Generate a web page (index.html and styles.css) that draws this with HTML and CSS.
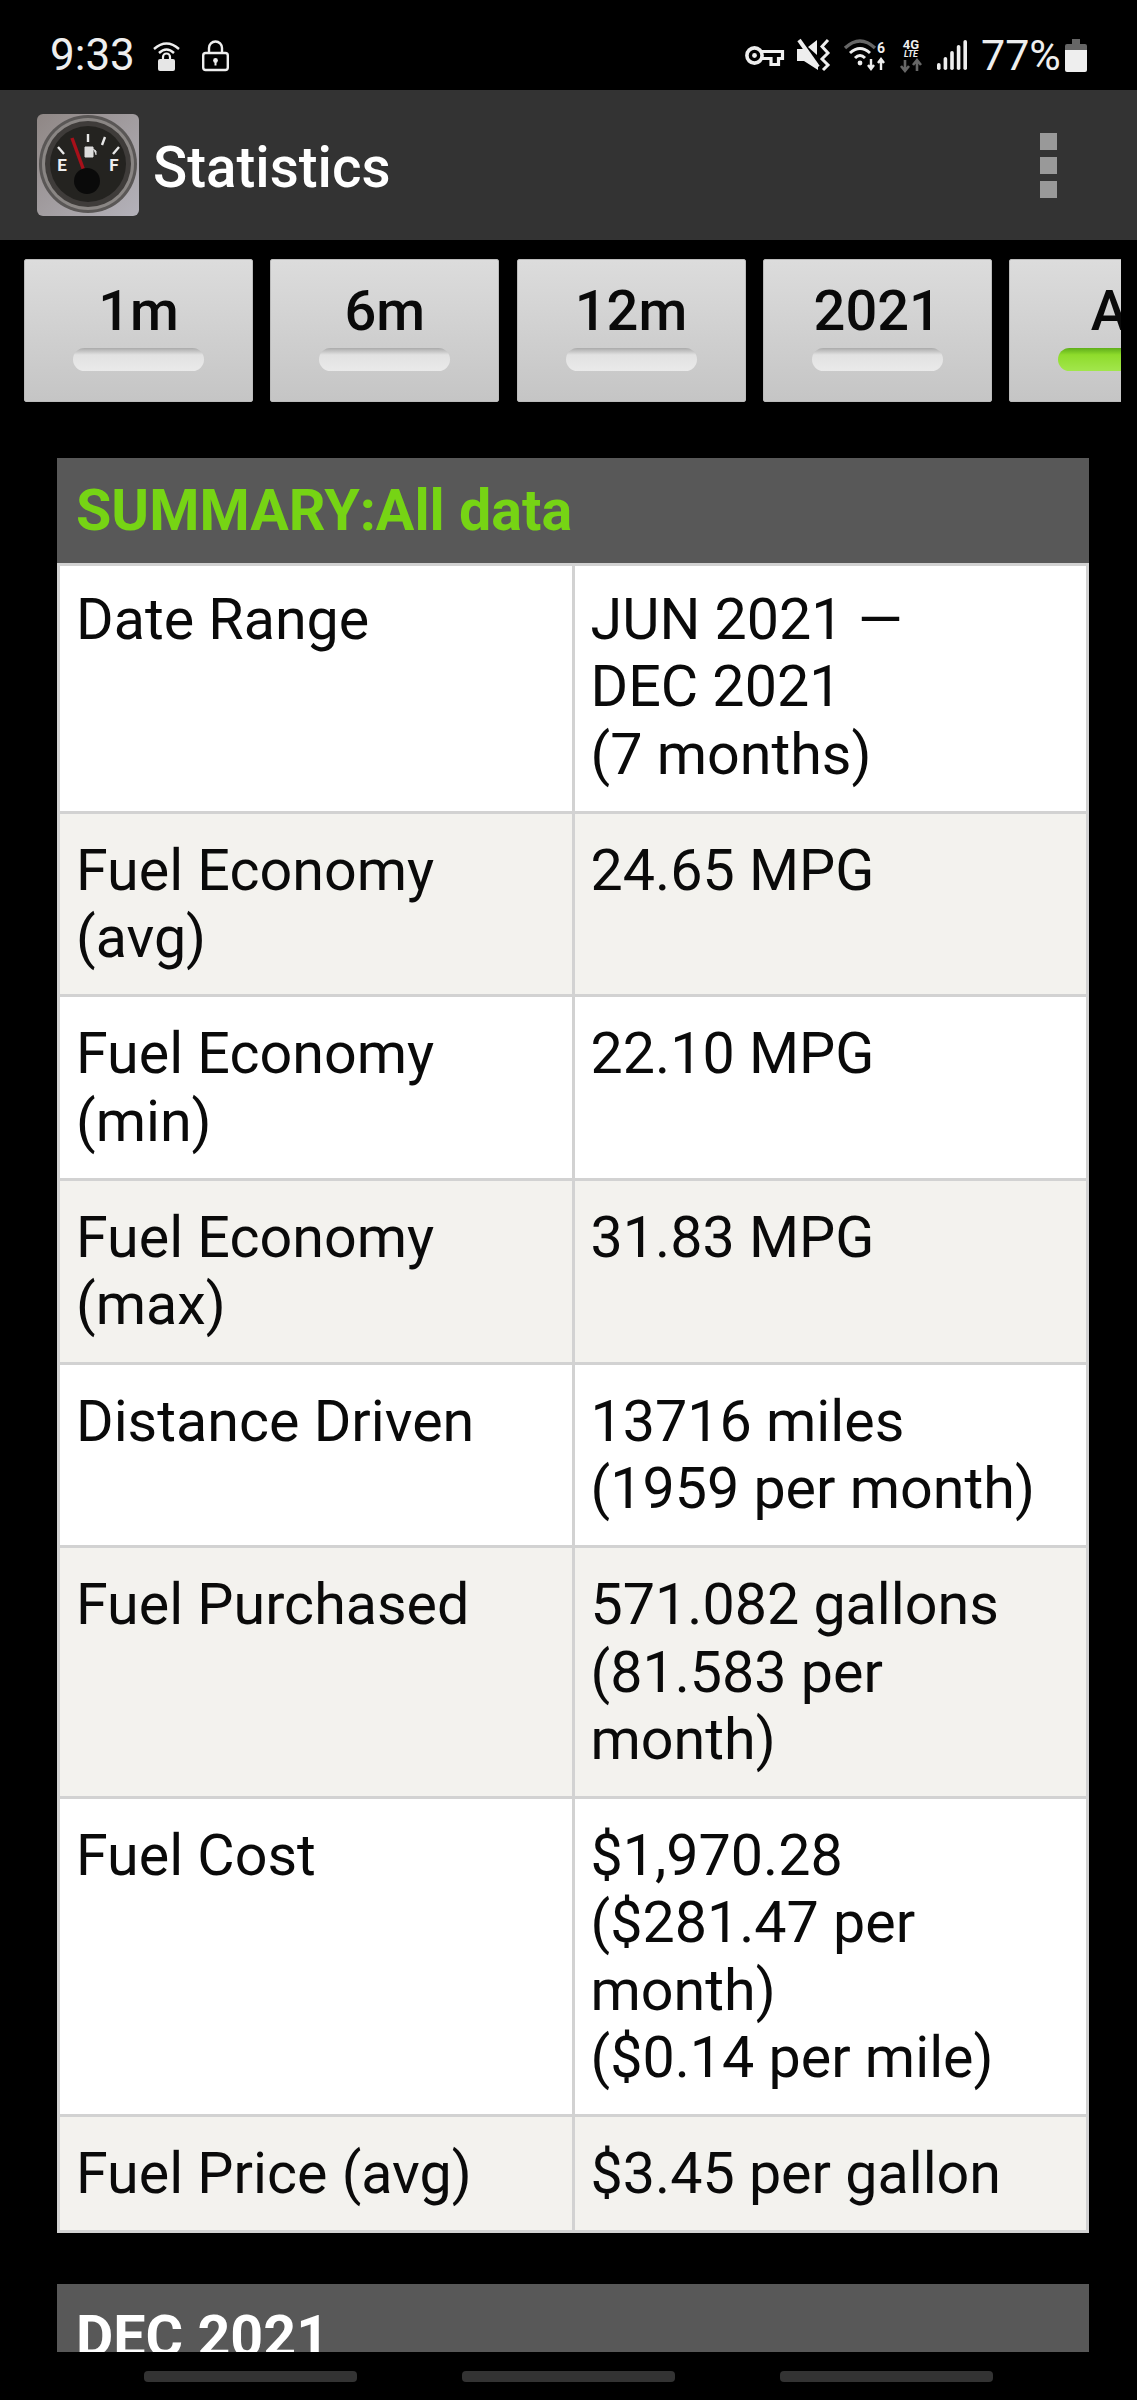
FILE: index.html
```html
<!DOCTYPE html>
<html lang="en">

<head>
  <meta charset="UTF-8">
  <meta name="viewport" content="width=device-width, initial-scale=1.0">
  <title>Statistics</title>
  <link rel="stylesheet" href="styles.css">
</head>

<body>
  <div class="status-bar">
    <div class="status-left">
      <span class="clock">9:33</span>
      <svg class="hotspot-icon" viewBox="0 0 27 31" width="27" height="31">
        <path d="M1 9 Q13.5 -2 26 9" fill="none" stroke="#eee" stroke-width="2.4" />
        <path d="M6 13 Q13.5 6 21 13" fill="none" stroke="#eee" stroke-width="2.4" />
        <path d="M10 19 V17 a3.5 3.5 0 0 1 7 0 V19" fill="none" stroke="#eee" stroke-width="2.2" />
        <rect x="5" y="19" width="17" height="12" rx="2" fill="#e6e6e6" />
      </svg>
      <svg class="lock-icon" viewBox="0 0 27 31" width="27" height="31">
        <path d="M7 13 V8 a6.5 6.5 0 0 1 13 0 V13" fill="none" stroke="#eee" stroke-width="2.4" />
        <rect x="1.2" y="13" width="24.6" height="17" rx="2.5" fill="none" stroke="#eee" stroke-width="2.4" />
        <circle cx="13.5" cy="20.5" r="2.4" fill="#eee" />
        <rect x="12.5" y="21" width="2" height="4.5" fill="#eee" />
      </svg>
    </div>
    <div class="status-right">
      <svg class="key-icon" viewBox="0 0 39 21" width="39" height="21">
        <circle cx="9.5" cy="10.5" r="7.6" fill="none" stroke="#eee" stroke-width="3.6" />
        <circle cx="9.5" cy="10.5" r="2.4" fill="#eee" />
        <path d="M17 6.5 H37.5 V13.5 H33.5 V19.5 H26 V13.5 H17" fill="none" stroke="#eee" stroke-width="3.2" />
      </svg>
      <svg class="mute-icon" viewBox="0 0 34 32" width="34" height="32">
        <path d="M0 10 H7 L21 25 V31 L7 22 H0 Z" fill="#eee" />
        <path d="M2 1 L21 28" stroke="#eee" stroke-width="4" />
        <path d="M11 8 L20 1 V16 Z" fill="#eee" />
        <path d="M31 1 L25 7.5 L31 14 L25 20 L31 26 L26 31" fill="none" stroke="#eee" stroke-width="3" />
      </svg>
      <svg class="wifi-icon" viewBox="0 0 43 32" width="43" height="32">
        <path d="M1 9 Q16 -5 31 9" fill="none" stroke="#666" stroke-width="3.4" />
        <path d="M6 14 Q16 5 26 14" fill="none" stroke="#eee" stroke-width="3" />
        <path d="M11 19 Q16 14 21 19" fill="none" stroke="#eee" stroke-width="3" />
        <circle cx="16" cy="24" r="2.4" fill="#eee" />
        <path d="M27 20 V30 M24 26 L27 30 L30 26" fill="none" stroke="#eee" stroke-width="2.4" />
        <path d="M37 31 V20 M34 24 L37 20 L40 24" fill="none" stroke="#eee" stroke-width="2.4" />
        <text x="37" y="14" class="icon-text wifi-six">6</text>
      </svg>
      <svg class="lte-icon" viewBox="0 0 24 33" width="24" height="33">
        <text x="12" y="10" class="icon-text lte-top">4G</text>
        <text x="12" y="18" class="icon-text lte-bottom">LTE</text>
        <path d="M6 21 V32 M2 27 L6 32 L10 27" fill="none" stroke="#666" stroke-width="2.6" />
        <path d="M18 32 V21 M14 26 L18 21 L22 26" fill="none" stroke="#666" stroke-width="2.6" />
      </svg>
      <svg class="signal-icon" viewBox="0 0 30 30" width="30" height="30">
        <rect x="0" y="23" width="3.6" height="7" rx="1.8" fill="#eee" />
        <rect x="6.6" y="17" width="3.6" height="13" rx="1.8" fill="#eee" />
        <rect x="13.2" y="11" width="3.6" height="19" rx="1.8" fill="#eee" />
        <rect x="19.8" y="5" width="3.6" height="25" rx="1.8" fill="#eee" />
        <rect x="26.4" y="0" width="3.6" height="30" rx="1.8" fill="#eee" />
      </svg>
      <span class="battery-text">77%</span>
      <svg class="battery-icon" viewBox="0 0 22 33" width="22" height="33">
        <rect x="7" y="0" width="8" height="5" fill="#666" />
        <path d="M0 7 a2 2 0 0 1 2 -2 H20 a2 2 0 0 1 2 2 V11 H0 Z" fill="#666" />
        <path d="M0 11 H22 V31 a2 2 0 0 1 -2 2 H2 a2 2 0 0 1 -2 -2 Z" fill="#eee" />
      </svg>
    </div>
  </div>

  <header class="app-bar">
    <svg class="app-logo" viewBox="0 0 102 102" width="102" height="102">
      <defs>
        <linearGradient id="plate" x1="0" y1="0" x2="1" y2="1">
          <stop offset="0" stop-color="#8f8785" />
          <stop offset="1" stop-color="#b4b2ba" />
        </linearGradient>
      </defs>
      <rect width="102" height="102" rx="6" fill="url(#plate)" />
      <circle cx="51" cy="50" r="49" fill="#5a5756" />
      <circle cx="51" cy="50" r="46" fill="#8a8684" />
      <circle cx="51" cy="50" r="43" fill="#3f3c3a" />
      <circle cx="51" cy="50" r="38" fill="#242320" />
      <path d="M51 20 V28 M21 33 L27 40 M82 33 L76 40 M68 23 L65 31" stroke="#e8e8e8" stroke-width="2.4" />
      <path d="M48 33 H56 V43 H48 Z M56 35 L59 37 V41" fill="#ddd" stroke="#ddd" stroke-width="1" />
      <text x="25" y="57" class="icon-text gauge-letter">E</text>
      <text x="77" y="57" class="icon-text gauge-letter">F</text>
      <path d="M35 24 L47 57" stroke="#a8101a" stroke-width="3.4" />
      <circle cx="50" cy="67" r="13" fill="#0a0a0a" />
    </svg>
    <h1 class="app-title">Statistics</h1>
    <div class="overflow-menu">
      <span class="menu-dot"></span>
      <span class="menu-dot"></span>
      <span class="menu-dot"></span>
    </div>
  </header>

  <main class="content">
    <nav class="range-tabs">
      <a class="range-tab"><span>1m</span><i class="tab-light"></i></a>
      <a class="range-tab"><span>6m</span><i class="tab-light"></i></a>
      <a class="range-tab"><span>12m</span><i class="tab-light"></i></a>
      <a class="range-tab"><span>2021</span><i class="tab-light"></i></a>
      <a class="range-tab"><span>All</span><i class="tab-light tab-light-on"></i></a>
    </nav>

    <section class="card">
      <h2 class="card-title card-title-green">SUMMARY:All data</h2>
      <table class="stats">
        <tr>
          <td>Date Range</td>
          <td>JUN 2021 —<br>DEC 2021<br>(7 months)</td>
        </tr>
        <tr>
          <td>Fuel Economy (avg)</td>
          <td>24.65 MPG</td>
        </tr>
        <tr>
          <td>Fuel Economy (min)</td>
          <td>22.10 MPG</td>
        </tr>
        <tr>
          <td>Fuel Economy (max)</td>
          <td>31.83 MPG</td>
        </tr>
        <tr>
          <td>Distance Driven</td>
          <td>13716 miles<br>(1959 per month)</td>
        </tr>
        <tr>
          <td>Fuel Purchased</td>
          <td>571.082 gallons<br>(81.583 per<br>month)</td>
        </tr>
        <tr>
          <td>Fuel Cost</td>
          <td>$1,970.28<br>($281.47 per<br>month)<br>($0.14 per mile)</td>
        </tr>
        <tr>
          <td>Fuel Price (avg)</td>
          <td>$3.45 per gallon</td>
        </tr>
      </table>
    </section>

    <section class="card">
      <h2 class="card-title">DEC 2021</h2>
    </section>
  </main>

  <footer class="nav-bar">
    <span class="nav-pill"></span>
    <span class="nav-pill"></span>
    <span class="nav-pill"></span>
  </footer>
</body>

</html>
```

FILE: styles.css
```css
html,
body {
  margin: 0;
  padding: 0;
  background-color: #000;
}

body {
  width: 1137px;
  height: 2400px;
  overflow: hidden;
  display: flex;
  flex-direction: column;
  font-family: Roboto, "Liberation Sans", sans-serif;
}

svg {
  display: block;
  flex: none;
  overflow: visible;
}

.icon-text {
  font-family: Roboto, sans-serif;
  font-weight: 700;
  fill: #eee;
  text-anchor: middle;
}

.gauge-letter {
  font-size: 17px;
}

.status-bar {
  height: 90px;
  flex: none;
  display: flex;
  justify-content: space-between;
  align-items: center;
  padding: 0 50px 0 50px;
  color: #eee;
  box-sizing: border-box;
}

.status-left,
.status-right {
  display: flex;
  align-items: center;
  padding-top: 20px;
}

.clock {
  font-size: 44px;
  line-height: 48px;
  width: 103px;
}

.hotspot-icon {
  margin-right: 22px;
}

.key-icon {
  margin-right: 13px;
}

.mute-icon {
  margin-right: 13px;
}

.wifi-icon {
  margin-right: 12px;
}

.wifi-six {
  font-size: 14px;
}

.lte-icon {
  margin-right: 14px;
}

.lte-top {
  font-size: 13px;
}

.lte-bottom {
  font-size: 9px;
  font-style: italic;
}

.signal-icon {
  margin-right: 14px;
}

.battery-text {
  font-size: 43px;
  line-height: 48px;
  width: 84px;
}

.app-bar {
  height: 150px;
  flex: none;
  display: flex;
  align-items: center;
  background-color: #333;
  padding: 0 80px 0 37px;
  box-sizing: border-box;
}

.app-logo {
  margin-right: 14px;
}

.app-title {
  flex: 1;
  margin: 0;
  padding-top: 5px;
  color: #fff;
  font-size: 56.5px;
  font-weight: 500;
}

.overflow-menu {
  display: flex;
  flex-direction: column;
  gap: 7px;
}

.menu-dot {
  width: 17px;
  height: 17px;
  background-color: #999;
}

.content {
  height: 2112px;
  flex: none;
  overflow: hidden;
}

.range-tabs {
  display: flex;
  gap: 17.25px;
  width: 1121px;
  overflow: hidden;
  padding: 19px 0 0 24px;
  box-sizing: border-box;
}

.range-tab {
  width: 229px;
  height: 143px;
  flex: none;
  box-sizing: border-box;
  display: flex;
  flex-direction: column;
  align-items: center;
  background: linear-gradient(#dcdcdc, #c5c5c5);
  border: 1px solid #bbb;
  border-radius: 2px;
  color: #0a0a0a;
  font-size: 56px;
  font-weight: 500;
  line-height: 64px;
  padding-top: 19px;
}

.tab-light {
  display: block;
  width: 131px;
  height: 23px;
  margin-top: 5px;
  border-radius: 12px;
  background: linear-gradient(#aaa 0, #e2e2e2 30%, #eaeaea);
}

.tab-light-on {
  background: linear-gradient(#5fae1a 0, #8fdc2c 30%, #a2e64c);
}

.card {
  margin: 56px 48px 0 57px;
}

.card + .card {
  margin-top: 51px;
}

.card-title {
  margin: 0;
  height: 105px;
  line-height: 105px;
  padding-left: 19px;
  background-color: #585858;
  color: #fff;
  font-size: 57.4px;
  font-weight: 700;
}

.card-title-green {
  color: #76d414;
}

.stats {
  width: 100%;
  border-collapse: collapse;
  table-layout: fixed;
  color: #0a0a0a;
  font-size: 57.4px;
  line-height: 67.3px;
}

.stats td {
  vertical-align: top;
  padding: 23px 10px 23px 16px;
  border: 3px solid #d2d2d2;
  background-color: #fff;
}

.stats tr:first-child td {
  padding-top: 20px;
}

.stats tr:last-child td {
  padding-bottom: 22px;
}

.stats tr:nth-child(even) td {
  background-color: #f3f2ee;
}

.nav-bar {
  height: 48px;
  display: flex;
  justify-content: center;
  gap: 105px;
  padding-top: 19px;
  box-sizing: border-box;
}

.nav-pill {
  width: 213px;
  height: 11px;
  border-radius: 4px;
  background-color: #333;
}
```
